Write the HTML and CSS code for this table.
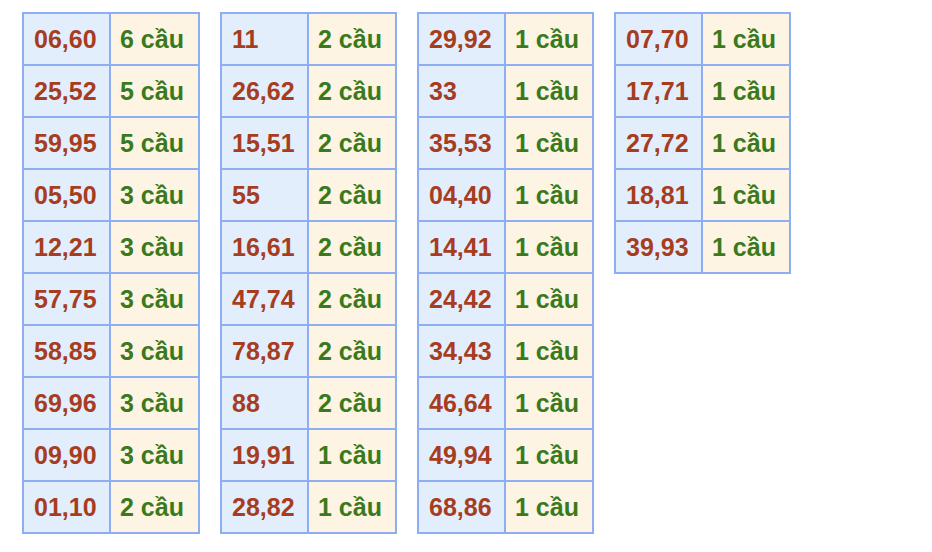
FILE: index.html
```html
<!DOCTYPE html>
<html lang="vi">
<head>
<meta charset="utf-8">
<title>Thống kê cầu</title>
<link rel="stylesheet" href="styles.css">
</head>
<body>
<div class="boards">
  <div class="board first">
    <div class="num">06,60</div><div class="cnt">6 cầu</div>
    <div class="num">25,52</div><div class="cnt">5 cầu</div>
    <div class="num">59,95</div><div class="cnt">5 cầu</div>
    <div class="num">05,50</div><div class="cnt">3 cầu</div>
    <div class="num">12,21</div><div class="cnt">3 cầu</div>
    <div class="num">57,75</div><div class="cnt">3 cầu</div>
    <div class="num">58,85</div><div class="cnt">3 cầu</div>
    <div class="num">69,96</div><div class="cnt">3 cầu</div>
    <div class="num">09,90</div><div class="cnt">3 cầu</div>
    <div class="num">01,10</div><div class="cnt">2 cầu</div>
  </div>
  <div class="board">
    <div class="num">11</div><div class="cnt">2 cầu</div>
    <div class="num">26,62</div><div class="cnt">2 cầu</div>
    <div class="num">15,51</div><div class="cnt">2 cầu</div>
    <div class="num">55</div><div class="cnt">2 cầu</div>
    <div class="num">16,61</div><div class="cnt">2 cầu</div>
    <div class="num">47,74</div><div class="cnt">2 cầu</div>
    <div class="num">78,87</div><div class="cnt">2 cầu</div>
    <div class="num">88</div><div class="cnt">2 cầu</div>
    <div class="num">19,91</div><div class="cnt">1 cầu</div>
    <div class="num">28,82</div><div class="cnt">1 cầu</div>
  </div>
  <div class="board">
    <div class="num">29,92</div><div class="cnt">1 cầu</div>
    <div class="num">33</div><div class="cnt">1 cầu</div>
    <div class="num">35,53</div><div class="cnt">1 cầu</div>
    <div class="num">04,40</div><div class="cnt">1 cầu</div>
    <div class="num">14,41</div><div class="cnt">1 cầu</div>
    <div class="num">24,42</div><div class="cnt">1 cầu</div>
    <div class="num">34,43</div><div class="cnt">1 cầu</div>
    <div class="num">46,64</div><div class="cnt">1 cầu</div>
    <div class="num">49,94</div><div class="cnt">1 cầu</div>
    <div class="num">68,86</div><div class="cnt">1 cầu</div>
  </div>
  <div class="board">
    <div class="num">07,70</div><div class="cnt">1 cầu</div>
    <div class="num">17,71</div><div class="cnt">1 cầu</div>
    <div class="num">27,72</div><div class="cnt">1 cầu</div>
    <div class="num">18,81</div><div class="cnt">1 cầu</div>
    <div class="num">39,93</div><div class="cnt">1 cầu</div>
  </div>
</div>
</body>
</html>
```
FILE: styles.css
```css
html, body {
  margin: 0;
  padding: 0;
  background: #ffffff;
}

body {
  font-family: "Liberation Sans", Arial, sans-serif;
}

.boards {
  display: flex;
  align-items: flex-start;
  gap: 20px;
  padding: 12px 0 0 22px;
}

.board {
  display: grid;
  grid-template-columns: 87px 88px;
  grid-auto-rows: 52px;
  border-top: 2px solid #8eaef3;
  border-left: 2px solid #8eaef3;
}

.board.first {
  grid-template-columns: 87px 89px;
}

.num,
.cnt {
  display: flex;
  align-items: center;
  padding-left: 10px;
  font-size: 25px;
  font-weight: bold;
  border-right: 2px solid #8eaef3;
  border-bottom: 2px solid #8eaef3;
  white-space: nowrap;
}

.num {
  background: #e3eefd;
  color: #a63d1f;
}

.cnt {
  padding-left: 9px;
  background: #fdf4e4;
  color: #3a7a1c;
}
```
